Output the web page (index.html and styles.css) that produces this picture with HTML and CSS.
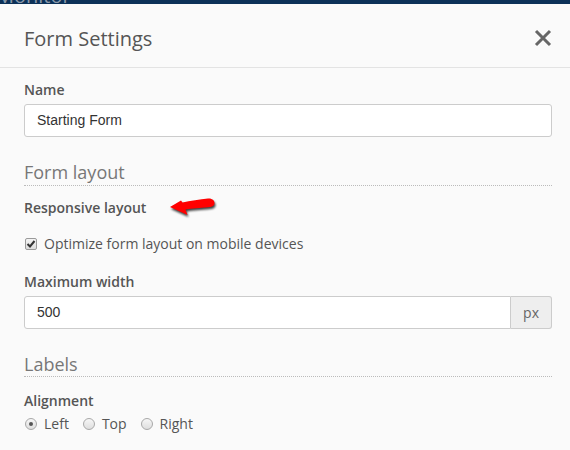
FILE: index.html
```html
<!DOCTYPE html>
<html lang="en">
<head>
    <meta charset="UTF-8">
    <title>Form Settings</title>
    <link rel="stylesheet" href="styles.css">
</head>
<body>
    <div class="app-bar"><span class="app-title">Monitor</span></div>

    <div class="modal">
        <div class="modal-header">
            <h2 class="modal-title">Form Settings</h2>
            <button class="close-button" aria-label="Close">
                <svg width="18" height="18" viewBox="0 0 18 18">
                    <path d="M2 2 L16 16 M16 2 L2 16" stroke="#666" stroke-width="3" fill="none"/>
                </svg>
            </button>
        </div>

        <div class="modal-body">
            <div class="form-group">
                <label class="control-label">Name</label>
                <div class="form-control">Starting Form</div>
            </div>

            <h3 class="legend">Form layout</h3>

            <div class="annotated">
                <label class="control-label">Responsive layout</label>
                <svg class="pointer" width="50" height="24" viewBox="0 0 50 24">
                    <path d="M2 11 L13 4.5 L14.5 6.5 C22 5 32 3 40 2.5 C45 2.3 46.5 5 46.5 7 C46.5 10 44 11 40 11.2 C32 11.6 24 12.5 17.5 13.5 L19.5 19 Z" fill="#f00"/>
                </svg>
            </div>
            <div class="check-row">
                <span class="checkbox">
                    <svg width="10" height="10" viewBox="0 0 10 10">
                        <path d="M1.5 5 L4 7.5 L8.5 2" stroke="#333" stroke-width="2" fill="none"/>
                    </svg>
                </span>
                <span>Optimize form layout on mobile devices</span>
            </div>

            <div class="form-group">
                <label class="control-label">Maximum width</label>
                <div class="input-group">
                    <div class="form-control">500</div>
                    <span class="input-addon">px</span>
                </div>
            </div>

            <h3 class="legend">Labels</h3>

            <label class="control-label">Alignment</label>
            <div class="radio-row">
                <span class="radio-item"><span class="radio checked"></span>Left</span>
                <span class="radio-item"><span class="radio"></span>Top</span>
                <span class="radio-item"><span class="radio"></span>Right</span>
            </div>
        </div>
    </div>
</body>
</html>
```

FILE: styles.css
```css
:root {
    --bg: #fafafa;
    --text: #555;
    --border: #ccc;
    --navy: #0c3158;
}

* {
    margin: 0;
    padding: 0;
    box-sizing: border-box;
}

body {
    font-family: 'Open Sans', sans-serif;
    background: var(--bg);
    color: var(--text);
    font-size: 14px;
    line-height: 20px;
}

.app-bar {
    height: 4px;
    background: var(--navy);
    overflow: hidden;
}

.app-title {
    display: block;
    margin: -14px 0 0 -4px;
    font-size: 20px;
    color: #8a98a8;
}

.modal {
    background: var(--bg);
}

.modal-header {
    display: flex;
    justify-content: space-between;
    align-items: center;
    height: 64px;
    padding: 6px 18px 0 24px;
    border-bottom: 1px solid #e3e3e3;
}

.modal-title {
    font-size: 20px;
    font-weight: 400;
    line-height: 22px;
    color: #555;
}

.close-button {
    display: flex;
    margin-top: -2px;
    border: none;
    background: none;
    cursor: pointer;
}

.modal-body {
    padding: 12px 18px 0 24px;
}

.control-label {
    display: block;
    font-weight: 600;
    color: #555;
}

.form-group .control-label {
    margin-bottom: 4px;
}

.form-control {
    flex: 1;
    height: 33px;
    padding: 0 12px;
    border: 1px solid var(--border);
    border-radius: 3px;
    background: #fff;
    font-family: 'Liberation Sans', Arial, sans-serif;
    font-size: 14px;
    line-height: 31px;
    color: #333;
}

.legend {
    margin-top: 25px;
    font-size: 18px;
    font-weight: 400;
    line-height: 21.6px;
    color: #777;
    border-bottom: 1px dotted #bbb;
    padding-bottom: 1px;
}

.legend + * {
    margin-top: 12px;
}

.annotated {
    position: relative;
}

.pointer {
    position: absolute;
    left: 144px;
    top: -2px;
    filter: drop-shadow(1.5px 2px 1.2px rgba(0, 0, 0, 0.75));
}

.check-row {
    display: flex;
    align-items: center;
    gap: 7px;
    margin: 16px 0 18px 1px;
}

.checkbox {
    display: flex;
    align-items: center;
    justify-content: center;
    width: 12px;
    height: 12px;
    border: 1px solid #9a9a9a;
    border-radius: 2px;
    background: linear-gradient(#f4f4f4, #dcdcdc);
}

.input-group {
    display: flex;
}

.input-group .form-control {
    border-radius: 3px 0 0 3px;
}

.input-addon {
    padding: 0 12px;
    height: 33px;
    line-height: 31px;
    background: #eee;
    border: 1px solid var(--border);
    border-left: none;
    border-radius: 0 3px 3px 0;
    color: #666;
}

.legend + .control-label {
    margin-top: 14px;
}

.radio-row {
    display: flex;
    margin-top: 3px;
    padding-left: 1px;
}

.radio-item {
    display: inline-flex;
    align-items: center;
    gap: 7px;
    margin-right: 14px;
}

.radio {
    display: flex;
    align-items: center;
    justify-content: center;
    width: 12px;
    height: 12px;
    border: 1px solid #a8a8a8;
    border-radius: 50%;
    background: linear-gradient(#f6f6f6, #dedede);
}

.radio.checked::after {
    content: '';
    width: 4px;
    height: 4px;
    border-radius: 50%;
    background: #555;
}
```
